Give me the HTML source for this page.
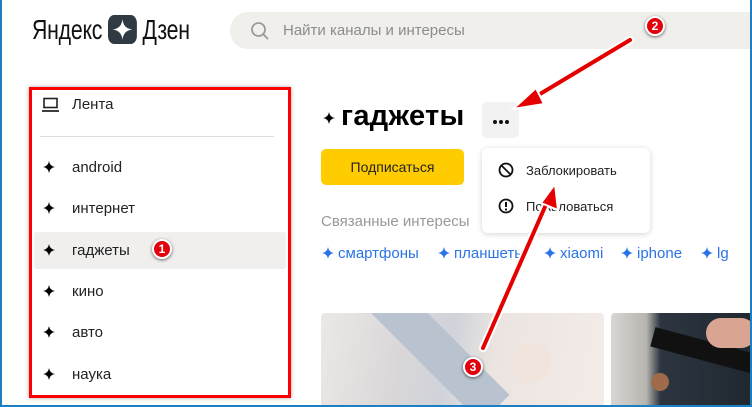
<!DOCTYPE html>
<html><head><meta charset="utf-8"><style>
*{margin:0;padding:0;box-sizing:border-box}
body{width:752px;height:407px;overflow:hidden;background:#fff;font-family:"Liberation Sans",sans-serif;position:relative;color:#000}
.frame{position:absolute;left:0;top:0;width:752px;height:407px;border:2px solid #1d7fc0;border-top:none;pointer-events:none;z-index:20}
.abs{position:absolute}
.logo{left:32px;top:14px;font-size:28px;letter-spacing:-0.3px;transform:scaleX(0.76);transform-origin:left;white-space:nowrap;color:#111}
.search{left:230px;top:12px;width:520px;height:37px;background:#f0efec;border-radius:18px 0 0 18px}
.search span{position:absolute;left:53px;top:10px;font-size:15px;color:#8c8c8c}
.side{left:29px;top:87px;width:262px;height:311px;border:3px solid #f00;box-shadow:0 0 4px rgba(0,0,0,.35)}
.item{position:absolute;left:42px;font-size:15px;color:#222}
.star{display:inline-block;width:14px;height:14px;vertical-align:-2px}
.tag{position:absolute;top:245px;font-size:15px;color:#2a73e8}
.tag svg{width:14px;height:14px;vertical-align:-2px;fill:#2a73e8;margin-right:3px}
.dd{left:482px;top:148px;width:168px;height:85px;background:#fff;border-radius:6px;box-shadow:0 1px 6px rgba(0,0,0,.18)}
.badge{position:absolute;width:20px;height:20px;border-radius:50%;background:#e3000b;border:2px solid #fff;box-shadow:0 1px 3px rgba(0,0,0,.6);color:#fff;font-size:12px;font-weight:bold;text-align:center;line-height:16px;z-index:15}
.dot{position:absolute;top:18px;width:4px;height:4px;border-radius:50%;background:#111}
</style></head><body>
<svg width="0" height="0" style="position:absolute"><defs><path id="s" d="M7 1Q7.8 6.2 13 7Q7.8 7.8 7 13Q6.2 7.8 1 7Q6.2 6.2 7 1Z"/></defs></svg>
<div class="abs logo">Яндекс <span style="display:inline-block;width:38px;height:29px;background:#2f3a42;border-radius:8px;vertical-align:-5px;position:relative"><svg width="38" height="29" viewBox="0 0 38 29" style="position:absolute;left:0;top:0"><path d="M19 4 Q20 13.5 32 14.5 Q20 15.5 19 25 Q18 15.5 6 14.5 Q18 13.5 19 4Z" fill="#fff"/></svg></span> Дзен</div>
<div class="abs search"><svg class="abs" style="left:20px;top:9px" width="20" height="20" viewBox="0 0 20 20"><circle cx="8.5" cy="8.5" r="6.5" fill="none" stroke="#999" stroke-width="1.8"/><path d="M13.5 13.5L18 18" stroke="#999" stroke-width="1.8"/></svg><span>Найти каналы и интересы</span></div>

<div class="abs side"></div>
<div class="abs" style="left:34px;top:232px;width:252px;height:37px;background:#f0efed;border-radius:3px"></div>
<svg class="abs" style="left:42px;top:97px" width="17" height="16" viewBox="0 0 17 16"><rect x="2" y="1.5" width="13" height="9" fill="none" stroke="#222" stroke-width="1.6"/><path d="M0 14h17" stroke="#222" stroke-width="1.8"/></svg>
<div class="item" style="left:72px;top:96px">Лента</div>
<div class="abs" style="left:40px;top:136px;width:234px;height:1px;background:#ddd"></div>
<div class="item" style="top:159px"><svg class="star"><use href="#s"/></svg><span style="margin-left:16px">android</span></div>
<div class="item" style="top:200px"><svg class="star"><use href="#s"/></svg><span style="margin-left:16px">интернет</span></div>
<div class="item" style="top:242px"><svg class="star"><use href="#s"/></svg><span style="margin-left:16px">гаджеты</span></div>
<div class="item" style="top:283px"><svg class="star"><use href="#s"/></svg><span style="margin-left:16px">кино</span></div>
<div class="item" style="top:324px"><svg class="star"><use href="#s"/></svg><span style="margin-left:16px">авто</span></div>
<div class="item" style="top:366px"><svg class="star"><use href="#s"/></svg><span style="margin-left:16px">наука</span></div>
<div class="badge" style="left:152px;top:239px">1</div>

<svg class="abs" style="left:322px;top:111px" width="14" height="14"><use href="#s"/></svg>
<div class="abs" style="left:341px;top:100px;font-size:29px;font-weight:bold;letter-spacing:0.3px">гаджеты</div>
<div class="abs" style="left:482px;top:102px;width:37px;height:36px;background:#f2f2f2;border-radius:5px"><div class="dot" style="left:11px"></div><div class="dot" style="left:17px"></div><div class="dot" style="left:23px"></div></div>
<div class="abs" style="left:321px;top:149px;width:143px;height:36px;background:#fc0;border-radius:5px;text-align:center;line-height:36px;font-size:14px;color:#222">Подписаться</div>
<div class="abs dd">
<svg class="abs" style="left:16px;top:14px" width="16" height="16" viewBox="0 0 16 16"><circle cx="8" cy="8" r="6.5" fill="none" stroke="#111" stroke-width="1.8"/><path d="M3.5 3.5L12.5 12.5" stroke="#111" stroke-width="1.8"/></svg>
<div class="abs" style="left:44px;top:15px;font-size:13px;color:#222">Заблокировать</div>
<svg class="abs" style="left:16px;top:50px" width="16" height="16" viewBox="0 0 16 16"><circle cx="8" cy="8" r="6.5" fill="none" stroke="#111" stroke-width="1.8"/><path d="M8 4v5" stroke="#111" stroke-width="2"/><circle cx="8" cy="11.5" r="1.1"/></svg>
<div class="abs" style="left:44px;top:51px;font-size:13px;color:#222">Пожаловаться</div>
</div>
<div class="abs" style="left:321px;top:213px;font-size:15px;color:#999">Связанные интересы</div>
<div class="tag" style="left:321px"><svg><use href="#s"/></svg>смартфоны</div>
<div class="tag" style="left:437px"><svg><use href="#s"/></svg>планшеты</div>
<div class="tag" style="left:543px"><svg><use href="#s"/></svg>xiaomi</div>
<div class="tag" style="left:620px"><svg><use href="#s"/></svg>iphone</div>
<div class="tag" style="left:700px"><svg><use href="#s"/></svg>lg</div>

<div class="abs" style="left:321px;top:313px;width:283px;height:94px;border-radius:4px 4px 0 0;overflow:hidden;background:linear-gradient(100deg,#ece8e6 0%,#d9d6d8 30%,#cfd3da 45%,#ebe4e0 60%,#f3ece8 100%)">
<div class="abs" style="top:-10px;width:40px;height:170px;background:#b9c3d0;transform:rotate(-45deg);transform-origin:top left;left:40px"></div>
<div class="abs" style="left:190px;top:30px;width:40px;height:40px;border-radius:50%;background:#f1e4dc"></div>
</div>
<div class="abs" style="left:611px;top:313px;width:141px;height:94px;border-radius:4px 0 0 0;overflow:hidden;background:linear-gradient(90deg,#d8d6d2 0%,#b7b5b0 25%,#2d3540 35%,#1f2830 100%)">
<div class="abs" style="left:40px;top:28px;width:110px;height:20px;background:#111;transform:rotate(15deg)"></div>
<div class="abs" style="left:95px;top:5px;width:50px;height:30px;border-radius:20px;background:#d9a592"></div>
<div class="abs" style="left:40px;top:60px;width:18px;height:18px;border-radius:50%;background:#a06b4a"></div>
</div>

<svg class="abs" style="left:0;top:0;z-index:14" width="752" height="407">
<g stroke="#fff" stroke-width="8" stroke-linecap="round" fill="#fff">
<path d="M630 40L530 100"/><path d="M483 348L548 200"/>
</g>
<path d="M630 40L530 100" stroke="#e50000" stroke-width="4" stroke-linecap="round"/>
<path d="M513 109L536 88L544 104Z" fill="#e50000" stroke="#fff" stroke-width="2"/>
<path d="M483 348L548 200" stroke="#e50000" stroke-width="4" stroke-linecap="round"/>
<path d="M555 184L558 210L541 203Z" fill="#e50000" stroke="#fff" stroke-width="2"/>
</svg>
<div class="badge" style="left:645px;top:16px">2</div>
<div class="badge" style="left:463px;top:357px">3</div>
<div class="frame"></div>
</body></html>
